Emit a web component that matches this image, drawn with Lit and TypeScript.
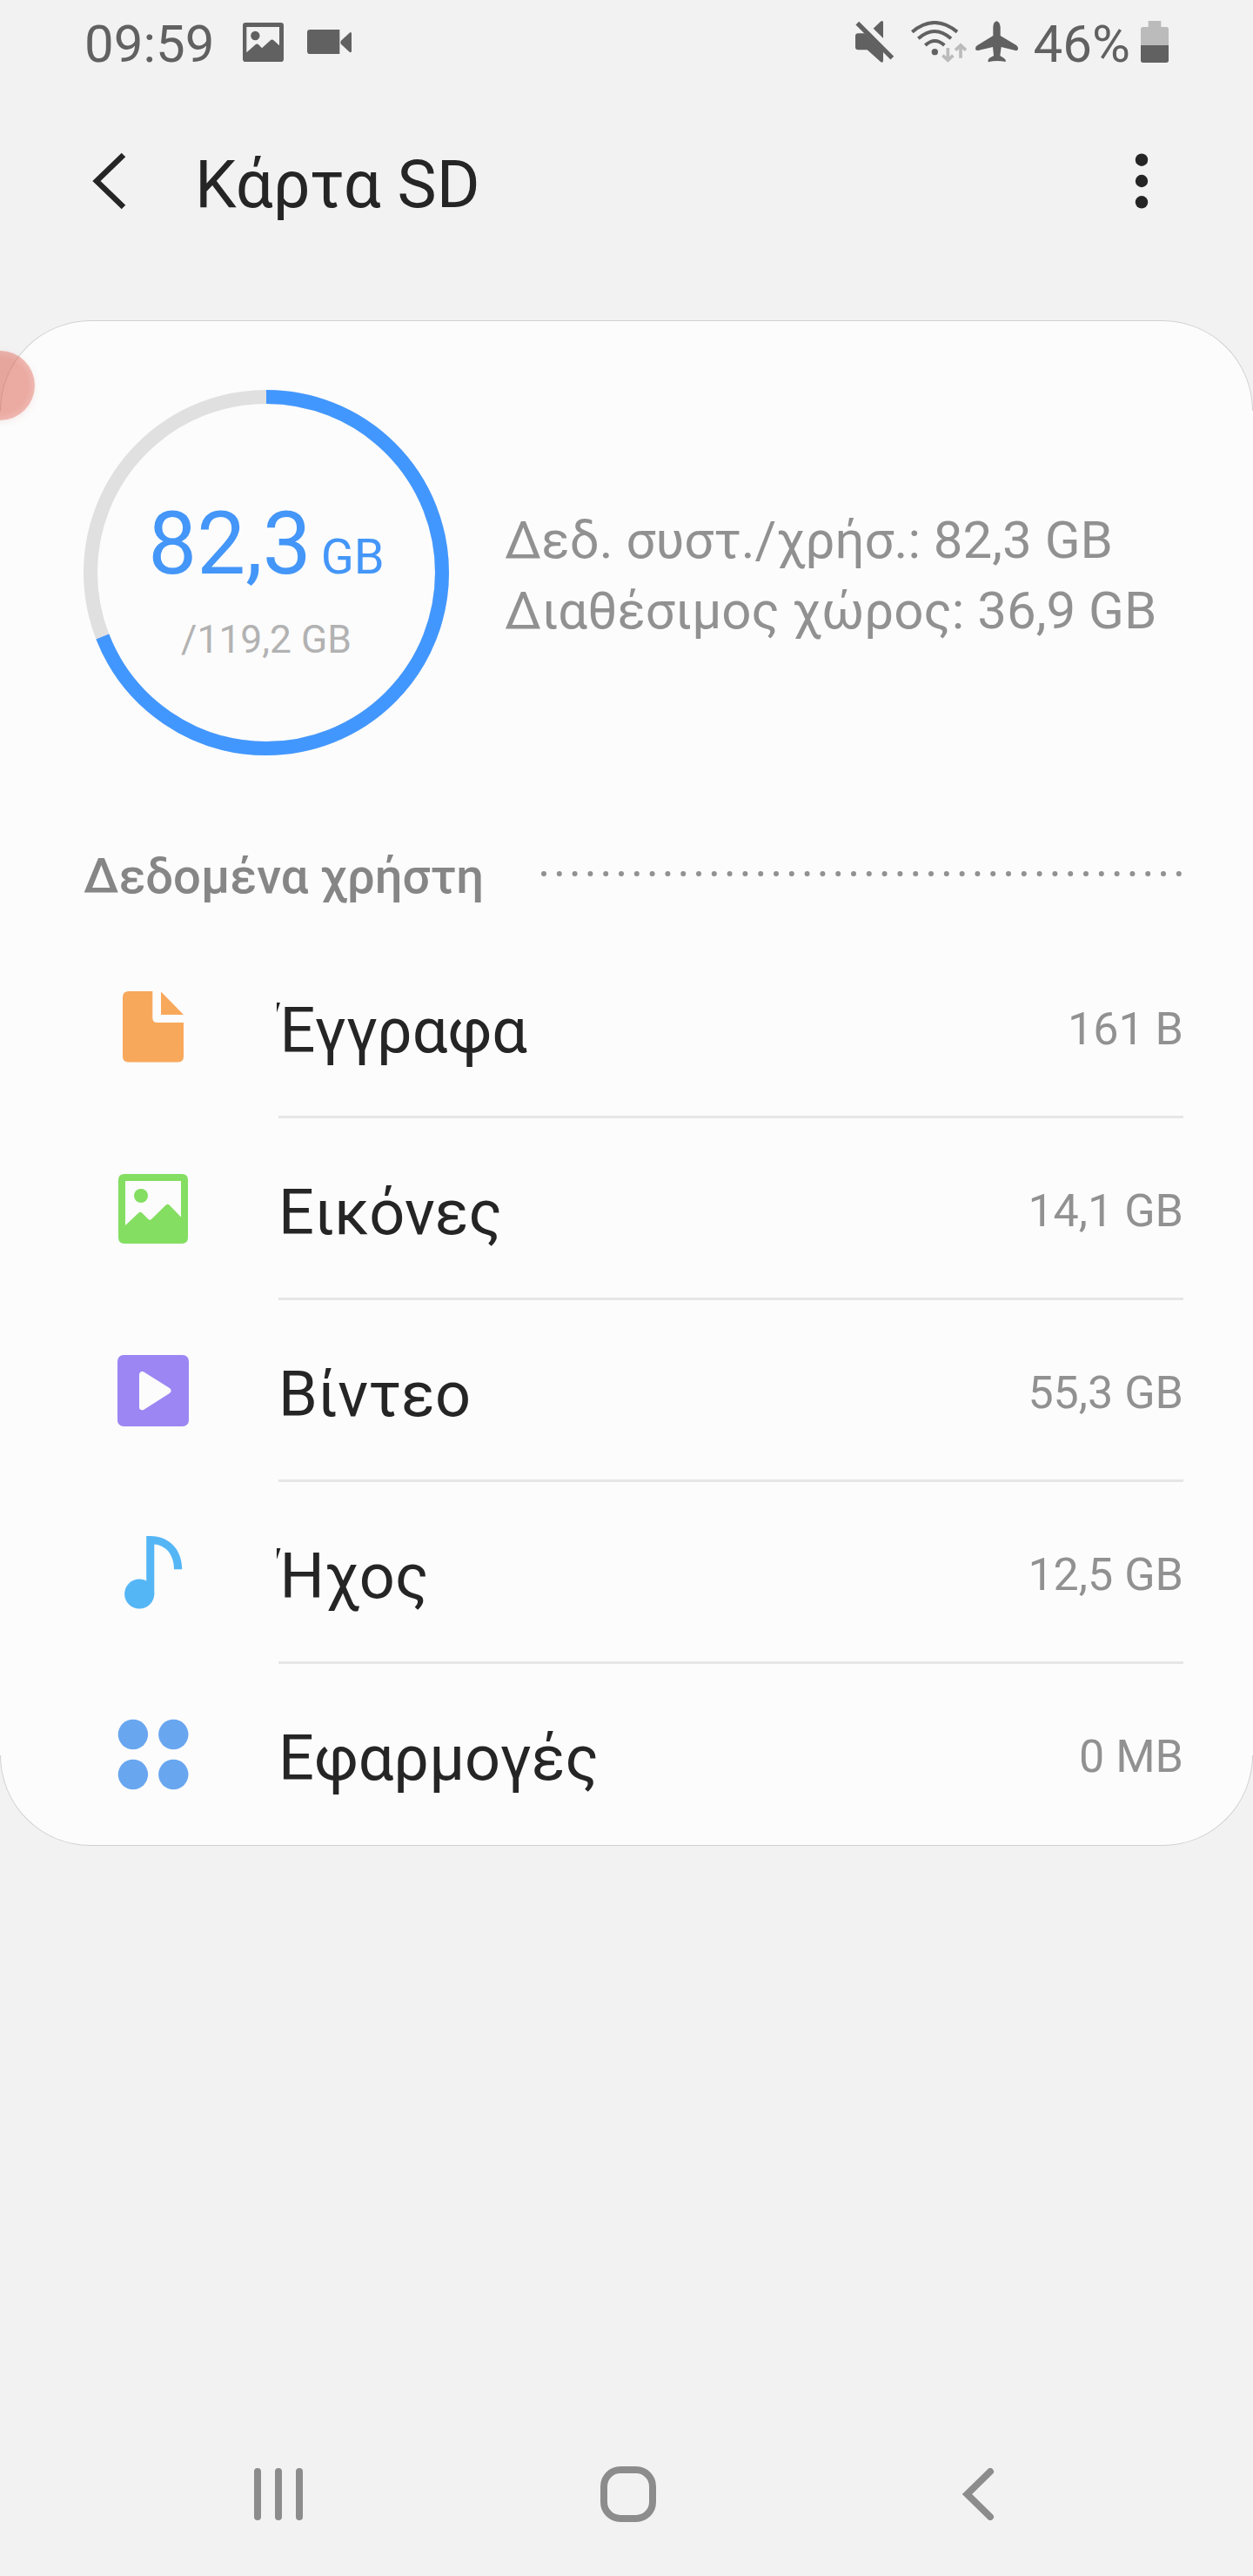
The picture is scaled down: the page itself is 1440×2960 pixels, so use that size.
import { LitElement, html, css, svg, type SVGTemplateResult } from "lit";
import { customElement, property } from "lit/decorators.js";
import { classMap } from "lit/directives/class-map.js";

interface Category {
  name: string;
  size: string;
  icon: SVGTemplateResult;
}

const CATEGORIES: Category[] = [
  {
    name: "Έγγραφα",
    size: "161 B",
    icon: svg`<g fill="#f8a85b">
      <path d="M14 1H41.300V31.500Q41.300 37 46.800 37H77V76Q77 82.500 70.500 82.500H14Q7 82.500 7 76V8Q7 1 14 1Z" />
      <path d="M51 1.500L77 28H51Z" />
    </g>`,
  },
  {
    name: "Εικόνες",
    size: "14,1 GB",
    icon: svg`<g fill="#84de61">
      <path fill-rule="evenodd"
        d="M9 2H75Q82 2 82 9V75Q82 82 75 82H9Q2 82 2 75V9Q2 2 9 2ZM10 10V61L25.500 46.500Q27.200 45.100 29 46.500L36.500 54Q38.200 55.500 40 54L56.800 37.500Q58.700 36 60.500 37.500L74 51.500V10Z" />
      <circle cx="28" cy="27" r="8" />
    </g>`,
  },
  {
    name: "Βίντεο",
    size: "55,3 GB",
    icon: svg`<rect x="1" y="1" width="82" height="82" rx="7" fill="#9c86f3" />
      <path d="M29.500 23.500V60.800L59 42Z" fill="#fcfcfc" stroke="#fcfcfc" stroke-width="7" stroke-linejoin="round" />`,
  },
  {
    name: "Ήχος",
    size: "12,5 GB",
    icon: svg`<g fill="#55b6f6">
      <path d="M34.200 0H38C62 0 75.200 17 75.200 38.300H66C66 22 57 10.500 43.300 9.400V66.700H34.200Z" />
      <circle cx="26.200" cy="66.500" r="17.100" />
    </g>`,
  },
  {
    name: "Εφαρμογές",
    size: "0 MB",
    icon: svg`<g fill="#69a6f0">
      <circle cx="18.900" cy="19" r="17.200" /><circle cx="65.300" cy="19" r="17.200" />
      <circle cx="18.900" cy="65" r="17.200" /><circle cx="65.300" cy="65" r="17.200" />
    </g>`,
  },
];

@customElement("status-bar")
class StatusBar extends LitElement {
  static styles = css`
    :host {
      display: flex;
      align-items: center;
      height: 96px;
      padding: 0 97px;
      box-sizing: border-box;
      color: #616161;
      font-size: 60px;
      line-height: 70px;
    }
    svg {
      display: block;
      flex: none;
      fill: currentColor;
    }
    .text {
      padding-top: 5px;
      white-space: nowrap;
    }
    .picture {
      margin-left: 33px;
    }
    .video {
      margin-left: 27px;
    }
    .right {
      display: flex;
      align-items: center;
      margin-left: auto;
    }
    .wifi {
      margin-left: 20px;
    }
    .plane {
      margin-left: 10px;
    }
    .percent {
      margin-left: 18px;
    }
    .battery {
      margin-left: 12px;
    }
  `;

  render() {
    return html`
      <span class="text">09:59</span>
      <svg class="picture" width="47" height="45" viewBox="596 75 141 135">
        <path fill-rule="evenodd"
          d="M606 75H727Q737 75 737 85V200Q737 210 727 210H606Q596 210 596 200V85Q596 75 606 75ZM609 90V178L638 152Q645 145 652 152L662 163L690 137Q697 130 704 137L722 154V90Z" />
        <circle cx="639" cy="120" r="15.500" />
      </svg>
      <svg class="video" width="51" height="28" viewBox="818 102 153 84">
        <path d="M828 102H930V186H828Q818 186 818 176V112Q818 102 828 102Z" />
        <path d="M935 140L964 113Q971 108 971 116V176Q971 183 964 179L935 152Q931 146 935 140Z" />
      </svg>
      <div class="right">
        <svg width="44" height="48" viewBox="66 72 132 144">
          <path d="M76 115H98L162 178V210Q161 219 153 213L107 172H76Q66 172 66 162V125Q66 115 76 115Z" />
          <path d="M128 98L153 74Q162 69 162 78V132Z" />
          <path d="M73 80L193 200" fill="none" stroke="currentColor" stroke-width="16" />
        </svg>
        <svg class="wifi" width="64" height="48" viewBox="258 72 192 144">
          <g fill="none" stroke="currentColor" stroke-width="12">
            <path d="M262 110Q339 46 417 110" />
            <path d="M283 133Q339 83 396 133" />
            <path d="M307 156Q340 126 373 156" />
          </g>
          <circle cx="340" cy="179" r="11" />
          <g fill="none" stroke="#bbbbbb" stroke-width="11">
            <path d="M385 165V207M367 191L385 208L403 191" />
            <path d="M429 200V157M411 173L429 156L447 173" />
          </g>
        </svg>
        <svg class="plane" width="49" height="48" viewBox="480 72 147 144">
          <path
            d="M553 73Q564 75 566 93V123L621 156Q628 161 627 169Q626 176 618 174L569 162L565 192L579 201Q586 207 584 213Q553 206 524 214Q522 206 528 200L543 192L540 162L489 174Q480 175 480 168Q480 161 486 157L541 123V93Q542 75 553 73Z" />
        </svg>
        <span class="text percent">46%</span>
        <svg class="battery" width="32" height="48" viewBox="1053 72 96 144">
          <path fill="#bbbbbb" d="M1079 72H1123V93H1141Q1149 93 1149 101V156H1053V101Q1053 93 1061 93H1079Z" />
          <path d="M1053 156H1149V208Q1149 216 1141 216H1061Q1053 216 1053 208Z" />
        </svg>
      </div>
    `;
  }
}

@customElement("usage-ring")
class UsageRing extends LitElement {
  @property({ type: Number }) used = 0;
  @property({ type: Number }) total = 1;

  static styles = css`
    :host {
      display: grid;
      flex: none;
      width: 420px;
      height: 420px;
    }
    svg,
    .caption {
      grid-area: 1 / 1;
    }
    .caption {
      display: flex;
      flex-direction: column;
      align-items: center;
      gap: 35px;
      padding-top: 127px;
      white-space: nowrap;
    }
    .used {
      display: flex;
      align-items: baseline;
      gap: 11px;
      height: 100px;
      color: #4496f8;
      font-size: 99.500px;
      line-height: 100px;
    }
    .unit {
      font-size: 56px;
    }
    .total {
      color: #b2b2b2;
      font-size: 44.400px;
      line-height: 50px;
    }
  `;

  private format(value: number) {
    return value.toFixed(1).replace(".", ",");
  }

  render() {
    const length = 2 * Math.PI * 202;
    return html`
      <svg width="420" height="420" viewBox="0 0 420 420" fill="none" stroke-width="16">
        <circle cx="210" cy="210" r="202" stroke="#e0e0e0" />
        <circle cx="210" cy="210" r="202" stroke="#4297ff" transform="rotate(-90 210 210)"
          stroke-dasharray="${(length * this.used) / this.total} ${length}" />
      </svg>
      <div class="caption">
        <div class="used"><span>${this.format(this.used)}</span><span class="unit">GB</span></div>
        <div class="total">/${this.format(this.total)} GB</div>
      </div>
    `;
  }
}

@customElement("app-root")
class AppRoot extends LitElement {
  static styles = css`
    :host {
      position: relative;
      display: flex;
      flex-direction: column;
      width: 1440px;
      height: 2960px;
      overflow: hidden;
      background: #f2f2f2;
      color: #252525;
      font-family: Roboto, "Liberation Sans", sans-serif;
    }
    svg {
      display: block;
      flex: none;
    }
    .header {
      display: flex;
      align-items: center;
      height: 224px;
      padding: 0 120px 0 104px;
    }
    .title {
      margin: 0 auto 0 76px;
      padding-top: 8px;
      font-size: 76px;
      font-weight: 400;
      line-height: 90px;
    }
    .card {
      position: relative;
      box-sizing: border-box;
      height: 1753px;
      margin-top: 48px;
      padding: 80px 80px 0 96px;
      border-radius: 104px;
      background: #fcfcfc;
    }
    .card::before,
    .card::after {
      content: "";
      position: absolute;
      left: 0;
      right: 0;
      height: 104px;
      box-sizing: border-box;
      border: 1px solid #d0d0d0;
      pointer-events: none;
    }
    .card::before {
      top: 0;
      border-bottom: 0;
      border-radius: 104px 104px 0 0;
    }
    .card::after {
      bottom: 0;
      border-top: 0;
      border-radius: 0 0 104px 104px;
    }
    .summary {
      display: flex;
      align-items: center;
      gap: 64px;
    }
    .details {
      padding-top: 5px;
      color: #919191;
      font-size: 60px;
      line-height: 81px;
      white-space: nowrap;
    }
    .section {
      display: flex;
      align-items: center;
      justify-content: space-between;
      height: 66px;
      margin-top: 106px;
      color: #868686;
    }
    .section-title {
      margin: 0;
      font-size: 56.200px;
      font-weight: 500;
      line-height: 66px;
      white-space: nowrap;
    }
    .dots {
      margin: 0 2px 6px 0;
    }
    .list {
      margin: 36px 0 0;
      padding: 0;
      list-style: none;
    }
    .row {
      display: flex;
      height: 209px;
    }
    .icon {
      margin: 62px 102px 0 38px;
    }
    .body {
      display: flex;
      flex: 1;
      justify-content: space-between;
      box-sizing: border-box;
      border-bottom: 3px solid #e6e6e6;
    }
    .row:last-child .body {
      border-bottom: 0;
    }
    .name {
      height: 100px;
      margin-top: 59px;
      font-size: 72px;
      line-height: 100px;
    }
    .accented {
      text-indent: -2px;
      clip-path: inset(0 -4px 0 -2px);
    }
    .size {
      margin-top: 77px;
      color: #919191;
      font-size: 52px;
      line-height: 60px;
    }
    .nav {
      display: flex;
      align-items: center;
      height: 188px;
      margin-top: auto;
      padding: 0 297px 0 291px;
    }
    .home {
      margin: 0 auto 0 341px;
    }
    .bubble {
      position: absolute;
      left: -40px;
      top: 403px;
      width: 80px;
      height: 80px;
      border-radius: 50%;
      background: radial-gradient(circle, rgba(218, 88, 72, 0.5) 55%, rgba(222, 98, 82, 0.44) 72%);
      box-shadow: 0 2px 8px rgba(200, 100, 90, 0.12);
    }
  `;

  render() {
    return html`
      <status-bar></status-bar>
      <header class="header">
        <svg width="44" height="68" viewBox="0 0 44 68">
          <path d="M38 4L7 34L38 64" fill="none" stroke="#252525" stroke-width="6.500" />
        </svg>
        <h1 class="title">Κάρτα SD</h1>
        <svg width="16" height="64" viewBox="0 0 16 64" fill="#252525">
          <circle cx="8" cy="7.700" r="7.200" /><circle cx="8" cy="32" r="7.200" /><circle cx="8" cy="56.300" r="7.200" />
        </svg>
      </header>
      <main class="card">
        <div class="summary">
          <usage-ring .used=${82.3} .total=${119.2}></usage-ring>
          <div class="details">
            <div>Δεδ. συστ./χρήσ.: 82,3 GB</div>
            <div>Διαθέσιμος χώρος: 36,9 GB</div>
          </div>
        </div>
        <div class="section">
          <h2 class="section-title">Δεδομένα χρήστη</h2>
          <svg class="dots" width="736" height="6" viewBox="0 0 736 6">
            <path d="M3 3H733.500" stroke="#919191" stroke-width="6" stroke-linecap="round" stroke-dasharray="0 17.800" />
          </svg>
        </div>
        <ul class="list">
          ${CATEGORIES.map(
            (c) => html`<li class="row">
              <svg class="icon" width="84" height="84" viewBox="0 0 84 84">${c.icon}</svg>
              <div class="body">
                <span class=${classMap({ name: true, accented: /^[ΈΉ]/.test(c.name) })}>${c.name}</span>
                <span class="size">${c.size}</span>
              </div>
            </li>`,
          )}
        </ul>
      </main>
      <nav class="nav">
        <svg width="58" height="60" viewBox="0 0 58 60">
          <path d="M5 4V56M29 4V56M53 4V56" stroke="#8c8c8c" stroke-width="8" stroke-linecap="round" />
        </svg>
        <svg class="home" width="64" height="64" viewBox="0 0 64 64">
          <rect x="4" y="4" width="56" height="56" rx="19" fill="none" stroke="#8c8c8c" stroke-width="8" />
        </svg>
        <svg width="38" height="60" viewBox="0 0 38 60">
          <path d="M33 4L6.500 30L33 56" fill="none" stroke="#8c8c8c" stroke-width="8" stroke-linecap="round" />
        </svg>
      </nav>
      <div class="bubble"></div>
    `;
  }
}
